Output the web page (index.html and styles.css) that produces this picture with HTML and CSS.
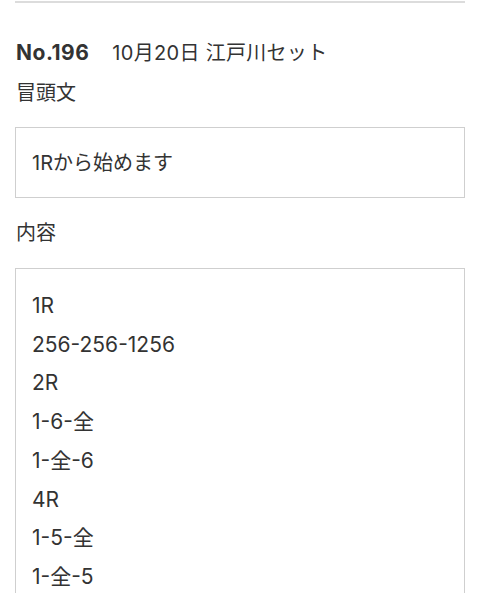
FILE: index.html
```html
<!DOCTYPE html>
<html lang="ja">
<head>
<meta charset="utf-8">
<title>No.196 10月20日 江戸川セット</title>
<link rel="stylesheet" href="styles.css">
</head>
<body>
<main class="page">
  <hr class="rule">
  <h2 class="title"><span class="title-no">No.196</span><span class="title-name">10月20日 江戸川セット</span></h2>
  <div class="label">冒頭文</div>
  <div class="field field-single">1Rから始めます</div>
  <div class="label label-gap">内容</div>
  <div class="field field-multi">
    <div class="line">1R</div>
    <div class="line">256-256-1256</div>
    <div class="line">2R</div>
    <div class="line">1-6-全</div>
    <div class="line">1-全-6</div>
    <div class="line">4R</div>
    <div class="line">1-5-全</div>
    <div class="line">1-全-5</div>
  </div>
</main>
</body>
</html>
```

FILE: styles.css
```css
html, body {
  margin: 0;
  padding: 0;
  background: #fff;
}

body {
  font-family: Inter, "Noto Sans CJK JP", sans-serif;
  font-size: 20px;
  color: #333;
}

.page {
  padding: 1px 15px 0;
}

.rule {
  margin: 0;
  height: 2px;
  border: 0;
  background: #dcdcdc;
}

.title {
  margin: 36px 0 0;
  font-size: 20px;
  font-weight: normal;
  line-height: 28px;
  padding-left: 1px;
}

.title-no {
  font-size: 21px;
  font-weight: bold;
  letter-spacing: 0.5px;
  margin-right: 23px;
}

.title-name {
  letter-spacing: 0.3px;
}

.label {
  margin-top: 12px;
  line-height: 28px;
  padding-left: 1px;
}

.label-gap {
  margin-top: 21px;
}

.field {
  border: 1px solid #cfcfcf;
  margin-top: 20px;
  padding: 0 16px;
}

.field-single {
  padding-top: 21px;
  padding-bottom: 20px;
  line-height: 28px;
}

.field-multi {
  margin-top: 21px;
  padding-top: 18px;
  font-size: 21px;
}

.line {
  line-height: 38.7px;
}
```
